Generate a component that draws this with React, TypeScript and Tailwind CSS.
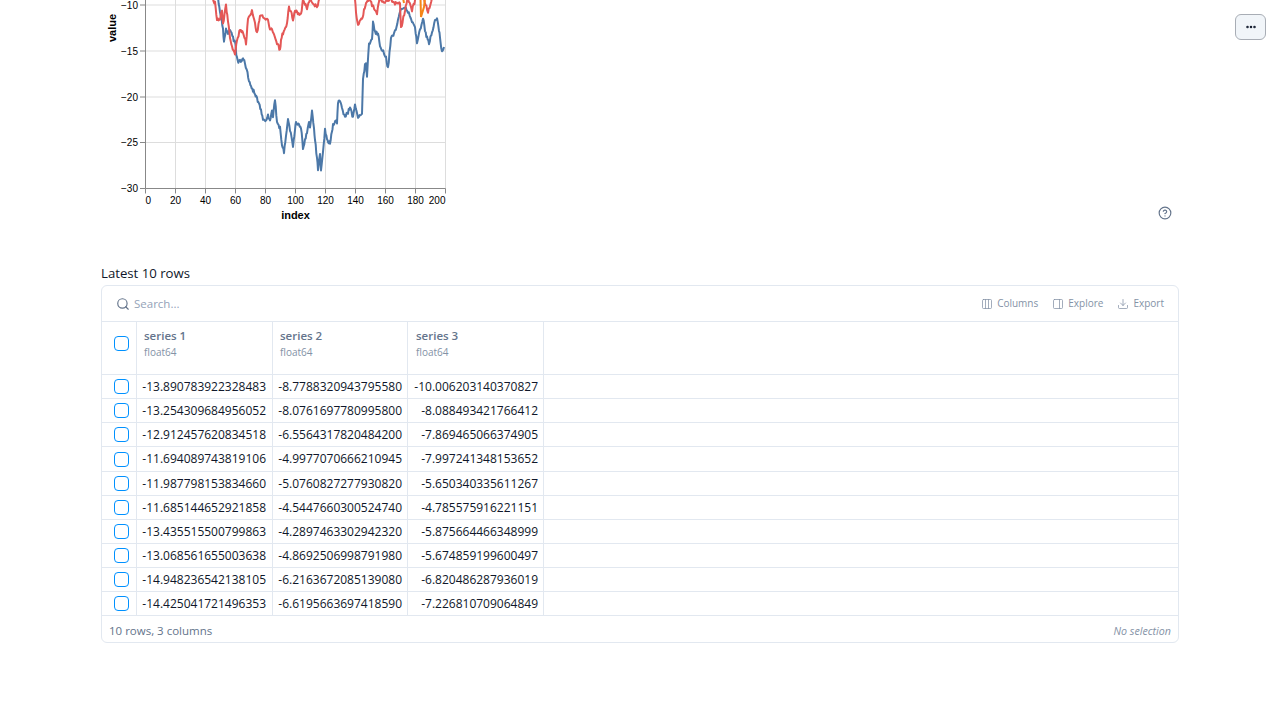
import React from "react";
import { Search, Columns3, PanelRight, Download, CircleHelp, Ellipsis } from "lucide-react";

const rows = [
  ["-13.890783922328483", "-8.7788320943795580", "-10.006203140370827"],
  ["-13.254309684956052", "-8.0761697780995800", "-8.088493421766412"],
  ["-12.912457620834518", "-6.5564317820484200", "-7.869465066374905"],
  ["-11.694089743819106", "-4.9977070666210945", "-7.997241348153652"],
  ["-11.987798153834660", "-5.0760827277930820", "-5.650340335611267"],
  ["-11.685144652921858", "-4.5447660300524740", "-4.785575916221151"],
  ["-13.435515500799863", "-4.2897463302942320", "-5.875664466348999"],
  ["-13.068561655003638", "-4.8692506998791980", "-5.674859199600497"],
  ["-14.948236542138105", "-6.2163672085139080", "-6.820486287936019"],
  ["-14.425041721496353", "-6.6195663697418590", "-7.226810709064849"],
];

const blue =
  "218,-2 220,12 221.7,20 223,30 224,42 225,36 226,30 228,33 230,30 231.7,32 233,38 235,43 236,50 236.7,57 238.3,63 240,61 241.7,62 243,57 245,64 246.7,70 249,80 251.7,88 253,91 255,93 257,99 259,103 261,111 263,120 266,121 268,116 270,120 272,110 273,116 275,100 277,122 280,128 282,145 284,152 286,135 288,118 290,130 293,147 295,130 296,122 299,124 301,128 303,148 305,140 307,133 309,122 310,128 312,112 314,128 315,140 317,158 318,170 320,153 321,172 323,153 325,130 327,140 328,143 330,143 332,130 333,125 336,121 337,122 338,103 340,101 342,107 345,118 348,112 350,108 353,118 355,105 358,117 362,112 363,80 365,65 366,63 367,75 369,43 372,40 373,23 375,33 378,33 380,47 384,53 386,58 388,68 391,38 395,32 398,20 401,10 405,7 408,12 412,22 415,28 417,43 420,30 423,17 425,30 427,38 429,43 432,32 435,20 437,20 439,30 440,37 442,52 444,47";
const red =
  "212,-2 215,3 217,20 220,21 222,10 223,25 226,5 228,22 230,37 232,47 235,55 237,40 240,30 243,32 246,43 248,20 252,10 255,24 257,33 260,15 264,18 268,20 270,28 272,30 275,38 277,43 280,50 281,40 283,33 287,23 289,8 291,10 293,20 295,10 297,12 301,15 303,-2 305,4 307,8 310,-2 314,4 317,7 320,-2 M355,-2 356,12 358,25 360,20 362,20 364,10 366,3 369,-2 372,5 377,13 380,-2 385,3 390,-1 395,3 400,2 401,28 405,10 408,-2 412,10 416,-2 420,-2 M424,-2 428,13 432,-2";

function jitter(src: string): string {
  const pts = src.split(" ").map((p) => p.split(",").map(Number));
  const out: string[] = [];
  for (let i = 0; i < pts.length - 1; i++) {
    const [x0, y0] = pts[i];
    const [x1, y1] = pts[i + 1];
    const n = Math.max(2, Math.round((x1 - x0) / 0.75));
    for (let k = 0; k < n; k++) {
      const t = k / n;
      const x = x0 + (x1 - x0) * t;
      const noise = Math.sin((x + k) * 12.9898 + y0 * 78.233) * 43758.5453;
      const d = (noise - Math.floor(noise) - 0.5) * 3.6;
      out.push(`${x.toFixed(1)},${(y0 + (y1 - y0) * t + d).toFixed(1)}`);
    }
  }
  const last = pts[pts.length - 1];
  out.push(`${last[0]},${last[1]}`);
  return out.join(" ");
}

const xLabels = [20, 40, 60, 80, 100, 120, 140, 160, 180];
const yRows: [number, string][] = [[5, "−10"], [51, "−15"], [97, "−20"], [142.5, "−25"], [188.5, "−30"]];

function Chart() {
  const redParts = red.split(" M");
  return (
    <svg width="360" height="225" viewBox="101 0 360 225" className="block shrink-0">
      <g stroke="#ddd" strokeWidth="1">
        {[...xLabels.map((v) => 145.5 + v * 1.5), 445.5].map((x) => (
          <line key={x} x1={x} x2={x} y1={-2} y2={188.5} />
        ))}
        {yRows.map(([y]) => (
          <line key={y} x1={145.5} x2={445.5} y1={y} y2={y} />
        ))}
      </g>
      <polyline points={jitter(blue)} fill="none" stroke="#4c78a8" strokeWidth="2" strokeLinejoin="round" />
      {redParts.map((p) => (
        <polyline key={p} points={jitter(p)} fill="none" stroke="#e45756" strokeWidth="2" strokeLinejoin="round" />
      ))}
      <polyline points="420.5,-2 421,17 424,7 425,-2" fill="none" stroke="#f58518" strokeWidth="2" />
      <polyline points="403,-2 404,3" fill="none" stroke="#f58518" strokeWidth="2" />
      <g stroke="#888" strokeWidth="1">
        <line x1={145.5} x2={145.5} y1={-2} y2={188.5} />
        <line x1={145.5} x2={445.5} y1={188.5} y2={188.5} />
        {yRows.map(([y]) => (
          <line key={y} x1={140} x2={145.5} y1={y} y2={y} />
        ))}
        {[0, ...xLabels, 200].map((v) => (
          <line key={v} x1={145.5 + v * 1.5} x2={145.5 + v * 1.5} y1={188.5} y2={193.5} />
        ))}
      </g>
      <g fontFamily="'Liberation Sans', sans-serif" fontSize="10" fill="#000">
        {yRows.map(([y, t]) => (
          <text key={y} x={138} y={y + 3.5} textAnchor="end">{t}</text>
        ))}
        <text x={145.5} y={204}>0</text>
        {xLabels.map((v) => (
          <text key={v} x={145.5 + v * 1.5} y={204} textAnchor="middle">{v}</text>
        ))}
        <text x={445.5} y={204} textAnchor="end">200</text>
        <text x={295.5} y={219} textAnchor="middle" fontSize="11" fontWeight="bold">index</text>
        <text transform="translate(116 28) rotate(-90)" textAnchor="middle" fontSize="11" fontWeight="bold">value</text>
      </g>
    </svg>
  );
}

function Box() {
  return <span className="block w-[15px] h-[15px] rounded-[4px] border border-[#0091ff] bg-white" />;
}

function Head({ name, w, pad }: { name: string; w: string; pad: string }) {
  return (
    <div className={`${w} ${pad} shrink-0 border-r border-[#e2e8f0] pt-[5px]`}>
      <div className="text-[11.5px] leading-[18px] font-semibold text-[#64748b]">{name}</div>
      <div className="text-[10px] leading-[14px] text-[#8492a6]">float64</div>
    </div>
  );
}

function Cell({ v, w, pr }: { v: string; w: string; pr: string }) {
  return (
    <div className={`${w} ${pr} shrink-0 border-r border-[#e2e8f0] text-right text-[12px] leading-[23px] text-[#0f172a]`}>
      {v}
    </div>
  );
}

function Tool({ icon, label }: { icon: React.ReactNode; label: string }) {
  return (
    <span className="flex items-center gap-[4px] text-[10px] text-[#8492a6]">
      {icon}
      {label}
    </span>
  );
}

export default function App() {
  return (
    <div className="relative h-[720px] w-[1280px] overflow-hidden bg-white font-['Open_Sans',sans-serif]">
      <button className="absolute left-[1235px] top-[14px] flex h-[26px] w-[31px] items-center justify-center rounded-[6px] border border-[#a8adb5] bg-[#f1f5f9] text-[#0f172a]">
        <Ellipsis size={12} strokeWidth={3} />
      </button>
      <div className="ml-[101px] w-[1078px]">
        <div className="flex items-end justify-between h-[225px]">
          <Chart />
          <CircleHelp size={14} className="mr-[7px] mb-[5px] text-[#64748b]" />
        </div>
        <div className="mt-[38px] h-[22px] text-[13.2px] leading-[20px] text-[#0f172a]">Latest 10 rows</div>
        <div className="h-[358px] rounded-[6px] border border-[#e2e8f0] bg-white overflow-hidden">
          <div className="flex h-[36px] items-center justify-between border-b border-[#e2e8f0] pl-[14px] pr-[14px]">
            <div className="flex items-center gap-[4px] text-[11.5px] text-[#94a3b8]">
              <Search size={14} className="text-[#64748b]" />
              Search...
            </div>
            <div className="flex items-center gap-[14px]">
              <Tool icon={<Columns3 size={12} strokeWidth={1.5} />} label="Columns" />
              <Tool icon={<PanelRight size={12} strokeWidth={1.5} />} label="Explore" />
              <Tool icon={<Download size={12} strokeWidth={1.5} />} label="Export" />
            </div>
          </div>
          <div className="flex h-[53.2px] border-b border-[#e2e8f0]">
            <div className="flex w-[35px] shrink-0 justify-center border-r border-[#e2e8f0] pt-[14px] pl-[4px]"><Box /></div>
            <Head name="series 1" w="w-[136px]" pad="pl-[7px]" />
            <Head name="series 2" w="w-[135px]" pad="pl-[7px]" />
            <Head name="series 3" w="w-[136px]" pad="pl-[8px]" />
          </div>
          {rows.map((r) => (
            <div key={r[0]} className="flex h-[24.1px] border-b border-[#e2e8f0]">
              <div className="flex w-[35px] shrink-0 items-center justify-center border-r border-[#e2e8f0] pl-[4px]"><Box /></div>
              <Cell v={r[0]} w="w-[136px]" pr="pr-[6px]" />
              <Cell v={r[1]} w="w-[135px]" pr="pr-[5px]" />
              <Cell v={r[2]} w="w-[136px]" pr="pr-[5px]" />
            </div>
          ))}
          <div className="flex h-[26.8px] items-center justify-between pl-[7px] pr-[7px] pt-[2px] text-[11.5px] text-[#64748b]">
            <span>10 rows, 3 columns</span>
            <span className="text-[10.7px] italic text-[#8492a6]">No selection</span>
          </div>
        </div>
      </div>
    </div>
  );
}
